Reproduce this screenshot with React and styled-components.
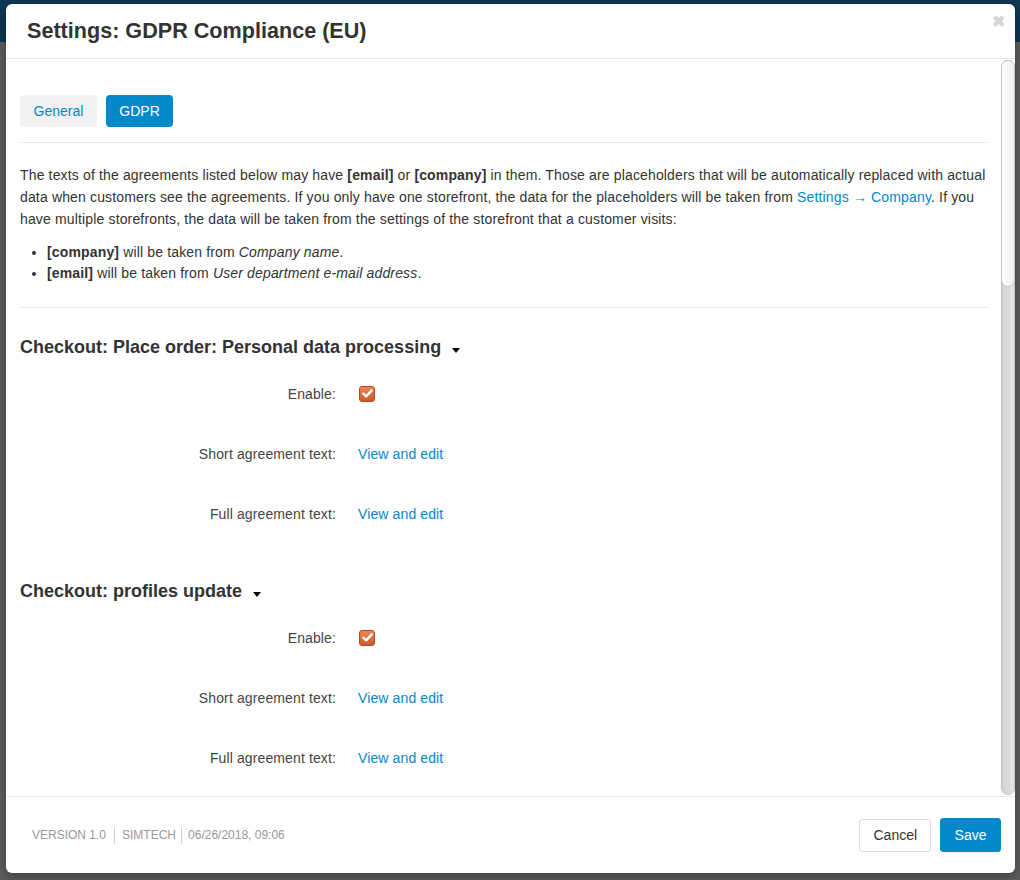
import React from "react";
import styled, { createGlobalStyle } from "styled-components";

const GlobalStyle = createGlobalStyle`
  html, body {
    margin: 0;
    padding: 0;
  }
  body {
    font-family: "Liberation Sans", Arial, sans-serif;
    color: #333;
  }
`;

const Page = styled.div`
  position: relative;
  width: 1020px;
  height: 880px;
  overflow: hidden;
  background: #5d5d5d;
`;

const PageTopBar = styled.div`
  height: 42px;
  background: #0d3856;
`;

const Modal = styled.div`
  position: absolute;
  left: 6px;
  top: 4px;
  width: 1009px;
  height: 869px;
  background: #fff;
  border-radius: 6px;
  display: flex;
  flex-direction: column;
  overflow: hidden;
  box-shadow: 0 3px 12px rgba(0, 0, 0, 0.35);
`;

const Header = styled.div`
  height: 54px;
  flex: 0 0 auto;
  display: flex;
  align-items: center;
  justify-content: space-between;
  padding: 0 10px 0 21px;
  border-bottom: 1px solid #e3e8ec;
`;

const Title = styled.h3`
  margin: 0;
  font-size: 21.6px;
  font-weight: bold;
  color: #333;
`;

const Close = styled.span`
  align-self: flex-start;
  margin-top: 10px;
  font-size: 16px;
  font-weight: bold;
  color: #d6d6d6;
  line-height: 1;
  cursor: pointer;
`;

const BodyWrap = styled.div`
  flex: 1 1 auto;
  display: flex;
  min-height: 0;
`;

const Body = styled.div`
  flex: 1 1 auto;
  overflow: hidden;
  padding: 0 13px 0 14px;
`;

const ScrollTrack = styled.div`
  flex: 0 0 14px;
  margin: 1px 0 1px;
  box-sizing: border-box;
  border: 1px solid #c4c4c4;
  border-radius: 7px;
  background: linear-gradient(to right, #d2d2d2, #e4e4e4);
  display: flex;
  flex-direction: column;
`;

const ScrollThumb = styled.div`
  height: 225px;
  margin: -1px -1px 0;
  border: 1px solid #c6c6c6;
  border-radius: 7px;
  background: linear-gradient(to right, #ffffff, #efefef);
`;

const Tabs = styled.div`
  display: flex;
  gap: 9px;
  padding: 36px 0 15px;
  border-bottom: 1px solid #e3e8ec;
`;

const Tab = styled.a`
  display: block;
  height: 32px;
  line-height: 32px;
  padding: 0 13.5px;
  border-radius: 4px;
  font-size: 14px;
  text-decoration: none;
  cursor: pointer;
  background: ${({ active }) => (active ? "#0388cc" : "#f2f2f2")};
  color: ${({ active }) => (active ? "#fff" : "#0388cc")};
`;

const Intro = styled.div`
  padding: 21px 0 23px;
  border-bottom: 1px solid #e3e8ec;
  font-size: 14px;
  letter-spacing: 0.15px;
  color: #333;
`;

const Paragraph = styled.p`
  margin: 0 0 12px;
  line-height: 22px;
`;

const List = styled.ul`
  margin: 0;
  padding-left: 27px;
  line-height: 21px;
`;

const Link = styled.a`
  color: #0388cc;
  text-decoration: none;
  cursor: pointer;
`;

const Section = styled.div`
  padding-top: ${({ first }) => (first ? "27px" : "45px")};
`;

const SectionTitle = styled.h4`
  margin: 0;
  font-size: 18px;
  line-height: 24px;
  font-weight: bold;
  color: #333;
  display: flex;
  align-items: center;
`;

const Caret = styled.span`
  display: inline-block;
  margin: 6px 0 0 11px;
  width: 0;
  height: 0;
  border-left: 4px solid transparent;
  border-right: 4px solid transparent;
  border-top: 5px solid #000;
`;

const Rows = styled.div`
  display: flex;
  flex-direction: column;
  gap: 20px;
  padding-top: 15px;
`;

const Row = styled.div`
  display: grid;
  grid-template-columns: 316px 1fr;
  column-gap: 22px;
  align-items: center;
  height: 40px;
  font-size: 14px;
  letter-spacing: 0.12px;
`;

const Label = styled.label`
  text-align: right;
  color: #444;
`;

const CheckBox = styled.span`
  display: flex;
  align-items: center;
  justify-content: center;
  width: 16px;
  height: 16px;
  box-sizing: border-box;
  margin-left: 1px;
  margin-top: -1px;
  border-radius: 3px;
  border: 1px solid #b24b21;
  background: linear-gradient(to bottom, #ec8554, #cd5829);
`;

const Footer = styled.div`
  height: 76px;
  flex: 0 0 auto;
  border-top: 1px solid #e3e8ec;
  display: flex;
  align-items: center;
  justify-content: space-between;
  padding: 0 14px 0 26px;
`;

const Meta = styled.div`
  display: flex;
  align-items: center;
  font-size: 12px;
  color: #999;
  text-transform: uppercase;
`;

const MetaItem = styled.span`
  padding: ${({ pad }) => pad};
  border-left: ${({ first }) => (first ? "none" : "1px solid #ccc")};
  line-height: 17px;
`;

const Buttons = styled.div`
  display: flex;
  gap: 9px;
  align-items: center;
`;

const Button = styled.button`
  font-family: "Liberation Sans", Arial, sans-serif;
  font-size: 14px;
  height: ${({ primary }) => (primary ? "34px" : "33px")};
  padding: 0 ${({ primary }) => (primary ? "13.5px" : "13px")};
  border-radius: 3px;
  cursor: pointer;
  border: 1px solid ${({ primary }) => (primary ? "#0388cc" : "#d9dde0")};
  background: ${({ primary }) => (primary ? "#0388cc" : "#fff")};
  color: ${({ primary }) => (primary ? "#fff" : "#333")};
`;

const Check = () => (
  <svg width="11" height="9" viewBox="0 0 11 9">
    <path
      d="M1.3 4.6 L4.2 7.4 L9.7 1.4"
      fill="none"
      stroke="#fff"
      strokeWidth="2.3"
      strokeLinecap="round"
      strokeLinejoin="round"
    />
  </svg>
);

const sections = [
  "Checkout: Place order: Personal data processing",
  "Checkout: profiles update",
];

const AgreementSection = ({ title, first }) => (
  <Section first={first}>
    <SectionTitle>
      {title}
      <Caret />
    </SectionTitle>
    <Rows>
      <Row>
        <Label>Enable:</Label>
        <CheckBox>
          <Check />
        </CheckBox>
      </Row>
      <Row>
        <Label>Short agreement text:</Label>
        <Link>View and edit</Link>
      </Row>
      <Row>
        <Label>Full agreement text:</Label>
        <Link>View and edit</Link>
      </Row>
    </Rows>
  </Section>
);

export default function App() {
  return (
    <>
      <GlobalStyle />
      <Page>
        <PageTopBar />
        <Modal>
          <Header>
            <Title>Settings: GDPR Compliance (EU)</Title>
            <Close>✖</Close>
          </Header>
          <BodyWrap>
            <Body>
              <Tabs>
                <Tab>General</Tab>
                <Tab active>GDPR</Tab>
              </Tabs>
              <Intro>
                <Paragraph>
                  The texts of the agreements listed below may have <b>[email]</b> or{" "}
                  <b>[company]</b> in them. Those are placeholders that will be
                  automatically replaced with actual data when customers see the
                  agreements. If you only have one storefront, the data for the
                  placeholders will be taken from <Link>Settings → Company</Link>.
                  If you have multiple storefronts, the data will be taken from the
                  settings of the storefront that a customer visits:
                </Paragraph>
                <List>
                  <li>
                    <b>[company]</b> will be taken from <i>Company name</i>.
                  </li>
                  <li>
                    <b>[email]</b> will be taken from{" "}
                    <i>User department e-mail address</i>.
                  </li>
                </List>
              </Intro>
              {sections.map((title, i) => (
                <AgreementSection key={title} title={title} first={i === 0} />
              ))}
            </Body>
            <ScrollTrack>
              <ScrollThumb />
            </ScrollTrack>
          </BodyWrap>
          <Footer>
            <Meta>
              <MetaItem first pad="0 8px 0 0">Version 1.0</MetaItem>
              <MetaItem pad="0 5px 0 7px">Simtech</MetaItem>
              <MetaItem pad="0 0 0 6px">06/26/2018, 09:06</MetaItem>
            </Meta>
            <Buttons>
              <Button>Cancel</Button>
              <Button primary>Save</Button>
            </Buttons>
          </Footer>
        </Modal>
      </Page>
    </>
  );
}
